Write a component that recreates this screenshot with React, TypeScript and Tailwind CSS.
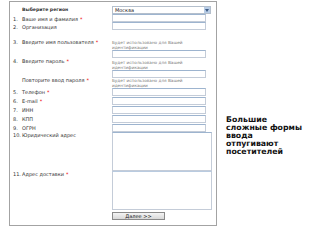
import React from "react";

const font = { fontFamily: '"DejaVu Sans", Verdana, sans-serif' };

function Label({ num, text, req, bold }: { num?: string; text: string; req?: boolean; bold?: boolean }) {
  return (
    <div className="flex w-[99px] shrink-0 text-[5px] leading-[6px] text-[#333]">
      <span className="w-[9px] shrink-0">{num}</span>
      <span className={bold ? "font-bold text-[4.6px]" : ""}>
        {text}
        {req && <span className="text-[#e00] ml-[2px]">*</span>}
      </span>
    </div>
  );
}

function Input({ h = 8 }: { h?: number }) {
  return (
    <div
      className="w-[94px] border border-[#c4ccd8] border-t-[#9db4cf] bg-white"
      style={{ height: h }}
    />
  );
}

function Hint() {
  return (
    <div className="text-[4.2px] leading-[5px] text-[#777] h-[10px]">
      <div>Будет использовано для Вашей</div>
      <div>идентификации</div>
    </div>
  );
}

export default function App() {
  return (
    <div className="w-[320px] h-[240px] bg-white flex items-start" style={font}>
      <div className="ml-[9px] mt-[1px] w-[208px] h-[225px] border border-[#a3a3a3] shrink-0 flex flex-col pl-[3px]">
        {/* Row 0 */}
        <div className="flex mt-[4px] h-[8px]">
          <div className="pt-[1px]"><Label text="Выберите регион" bold /></div>
          <div className="w-[99px] h-[8px] border border-[#b4bfcc] bg-white flex items-center justify-between">
            <span className="text-[5px] leading-[6px] text-[#222] pl-[2px]">Москва</span>
            <span className="w-[6px] h-[6px] bg-[#b8cde6] flex items-center justify-center">
              <svg width="4" height="3" viewBox="0 0 4 3"><path d="M0 0 L4 0 L2 3 Z" fill="#3c5a85" /></svg>
            </span>
          </div>
        </div>
        {/* Row 1 */}
        <div className="flex h-[8px]">
          <div className="pt-[2px]"><Label num="1." text="Ваше имя и фамилия" req /></div>
          <Input />
        </div>
        {/* Row 2 */}
        <div className="flex h-[8px]">
          <div className="pt-[2px]"><Label num="2." text="Организация" /></div>
          <Input />
        </div>
        {/* Row 3 */}
        <div className="flex h-[28px]">
          <div className="pt-[9px]"><Label num="3." text="Введите имя пользователя" req /></div>
          <div className="flex flex-col pt-[10px]">
            <Hint />
            <Input />
          </div>
        </div>
        {/* Row 4 */}
        <div className="flex h-[20px]">
          <div className="pt-[0px]"><Label num="4." text="Введите пароль" req /></div>
          <div className="flex flex-col pt-[2px]">
            <Hint />
            <Input />
          </div>
        </div>
        {/* Row P */}
        <div className="flex h-[10px]">
          <div className="-mt-[1px]"><Label num="" text="Повторите ввод пароля" req /></div>
          <div className="flex flex-col pt-[0px]">
            <Hint />
          </div>
        </div>
        {/* Rows 5-9 */}
        <div className="flex flex-col gap-[1px]">
          {[
            ["5.", "Телефон", true],
            ["6.", "E-mail", true],
            ["7.", "ИНН", false],
            ["8.", "КПП", false],
            ["9.", "ОГРН", false],
          ].map(([n, t, r]) => (
            <div key={n as string} className="flex h-[8px] items-center">
              <Label num={n as string} text={t as string} req={r as boolean} />
              <Input />
            </div>
          ))}
        </div>
        {/* Row 10 */}
        <div className="flex h-[39px] mt-[0px]">
          <div className="pt-[0px]"><Label num="10." text="Юридический адрес" /></div>
          <div className="w-[100px] h-[39px] border border-[#c4ccd8] border-t-[#9db4cf] bg-white" />
        </div>
        {/* Row 11 */}
        <div className="flex h-[39px]">
          <div className="pt-[0px]"><Label num="11." text="Адрес доставки" req /></div>
          <div className="w-[100px] h-[39px] border border-[#c4ccd8] border-t-[#b9cbe0] bg-white" />
        </div>
        {/* Button */}
        <div className="flex mt-[2px]">
          <div className="w-[99px] shrink-0" />
          <div className="w-[53px] h-[8px] border border-[#8a8a8a] bg-gradient-to-b from-[#f4f4f4] to-[#d8d8d8] flex items-center justify-center text-[5px] leading-[6px] text-[#222]">
            Далее &gt;&gt;
          </div>
        </div>
      </div>
      <div className="ml-[9px] mt-[116px] text-[7.8px] leading-[8px] font-bold text-[#111]" style={{ fontFamily: '"DejaVu Sans", Verdana, sans-serif' }}>
        <div>Большие</div>
        <div>сложные формы</div>
        <div>ввода</div>
        <div>отпугивают</div>
        <div>посетителей</div>
      </div>
    </div>
  );
}
